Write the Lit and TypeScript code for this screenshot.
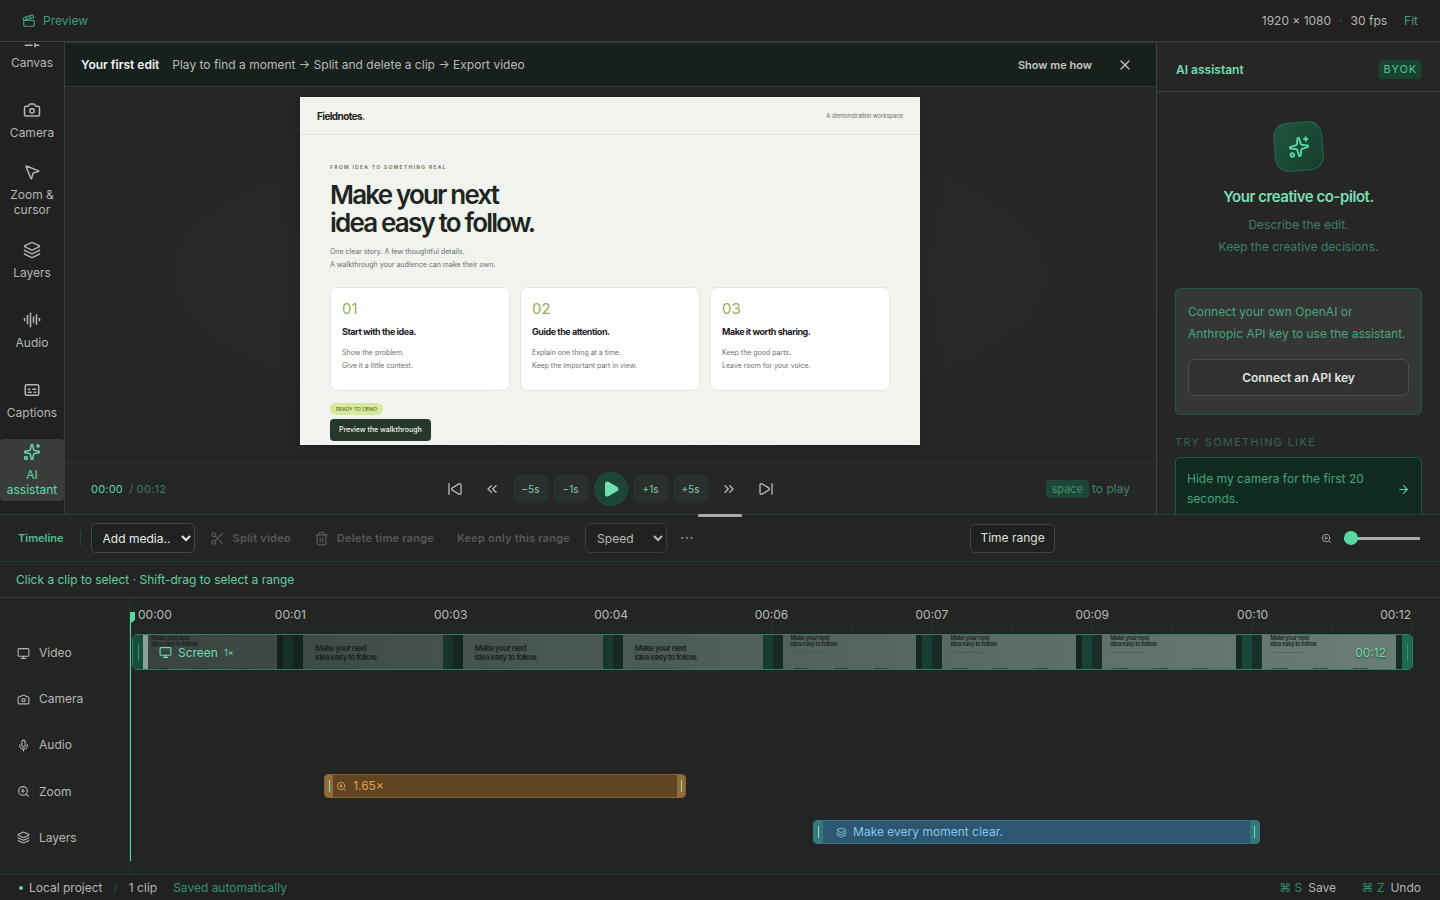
import { LitElement, html, css, svg } from "lit";
import { customElement, property } from "lit/decorators.js";
import { classMap } from "lit/directives/class-map.js";

const ICONS: Record<string, unknown> = {
  clapper: svg`<path d="M20.2 6 3 11l-.9-2.4c-.3-1.1.3-2.2 1.3-2.5l13.5-4c1.1-.3 2.2.3 2.5 1.3Z"/><path d="m6.2 5.3 3.1 3.9"/><path d="m12.4 3.4 3.1 4"/><path d="M3 11h18v8a2 2 0 0 1-2 2H5a2 2 0 0 1-2-2Z"/>`,
  sliders: svg`<path d="M10 5H3"/><path d="M12 19H3"/><path d="M14 3v4"/><path d="M16 17v4"/><path d="M21 12h-9"/><path d="M21 19h-5"/><path d="M21 5h-7"/><path d="M8 10v4"/><path d="M8 12H3"/>`,
  camera: svg`<path d="M13.997 4a2 2 0 0 1 1.76 1.05l.486.9A2 2 0 0 0 18.003 7H20a2 2 0 0 1 2 2v9a2 2 0 0 1-2 2H4a2 2 0 0 1-2-2V9a2 2 0 0 1 2-2h1.997a2 2 0 0 0 1.759-1.048l.489-.904A2 2 0 0 1 10.004 4z"/><circle cx="12" cy="13" r="3"/>`,
  pointer: svg`<path d="M4.037 4.688a.495.495 0 0 1 .651-.651l16 6.5a.5.5 0 0 1-.063.947l-6.124 1.58a2 2 0 0 0-1.438 1.435l-1.579 6.126a.5.5 0 0 1-.947.063z"/>`,
  layers: svg`<path d="M12.83 2.18a2 2 0 0 0-1.66 0L2.6 6.08a1 1 0 0 0 0 1.83l8.58 3.91a2 2 0 0 0 1.66 0l8.58-3.9a1 1 0 0 0 0-1.83z"/><path d="M2 12a1 1 0 0 0 .58.91l8.6 3.91a2 2 0 0 0 1.65 0l8.58-3.9A1 1 0 0 0 22 12"/><path d="M2 17a1 1 0 0 0 .58.91l8.6 3.91a2 2 0 0 0 1.65 0l8.58-3.9A1 1 0 0 0 22 17"/>`,
  audio: svg`<path d="M2 10v3"/><path d="M6 6v11"/><path d="M10 3v18"/><path d="M14 8v7"/><path d="M18 5v13"/><path d="M22 10v3"/>`,
  captions: svg`<rect x="3" y="5" width="18" height="14" rx="2"/><path d="M7 15h4M15 15h2M7 11h2M13 11h4"/>`,
  sparkles: svg`<path d="M11.017 2.814a1 1 0 0 1 1.966 0l1.051 5.558a2 2 0 0 0 1.594 1.594l5.558 1.051a1 1 0 0 1 0 1.966l-5.558 1.051a2 2 0 0 0-1.594 1.594l-1.051 5.558a1 1 0 0 1-1.966 0l-1.051-5.558a2 2 0 0 0-1.594-1.594l-5.558-1.051a1 1 0 0 1 0-1.966l5.558-1.051a2 2 0 0 0 1.594-1.594z"/><path d="M20 2v4"/><path d="M22 4h-4"/><circle cx="4" cy="20" r="2"/>`,
  close: svg`<path d="M18 6 6 18"/><path d="m6 6 12 12"/>`,
  skipBack: svg`<path d="M17.971 4.285A2 2 0 0 1 21 6v12a2 2 0 0 1-3.029 1.715l-9.997-5.998a2 2 0 0 1-.003-3.432z"/><path d="M3 20V4"/>`,
  skipForward: svg`<path d="M21 4v16"/><path d="M6.029 4.285A2 2 0 0 0 3 6v12a2 2 0 0 0 3.029 1.715l9.997-5.998a2 2 0 0 0 .003-3.432z"/>`,
  rewind: svg`<path d="m11 17-5-5 5-5"/><path d="m18 17-5-5 5-5"/>`,
  forward: svg`<path d="m6 17 5-5-5-5"/><path d="m13 17 5-5-5-5"/>`,
  play: svg`<path fill="currentColor" d="M5 5a2 2 0 0 1 3.008-1.728l11.997 6.998a2 2 0 0 1 .003 3.458l-12 7A2 2 0 0 1 5 19z"/>`,
  scissors: svg`<circle cx="6" cy="6" r="3"/><path d="M8.12 8.12 12 12"/><path d="M20 4 8.12 15.88"/><circle cx="6" cy="18" r="3"/><path d="M14.8 14.8 20 20"/>`,
  trash: svg`<path d="M10 11v6"/><path d="M14 11v6"/><path d="M19 6v14a2 2 0 0 1-2 2H7a2 2 0 0 1-2-2V6"/><path d="M3 6h18"/><path d="M8 6V4a2 2 0 0 1 2-2h4a2 2 0 0 1 2 2v2"/>`,
  more: svg`<circle cx="12" cy="12" r="1"/><circle cx="20" cy="12" r="1"/><circle cx="4" cy="12" r="1"/>`,
  zoom: svg`<circle cx="11" cy="11" r="8"/><path d="m21 21-4.35-4.35"/><path d="M11 8v6"/><path d="M8 11h6"/>`,
  monitor: svg`<rect x="2" y="3" width="20" height="14" rx="2"/><path d="M8 21h8"/><path d="M12 17v4"/>`,
  mic: svg`<path d="M12 19v3"/><path d="M19 10v2a7 7 0 0 1-14 0v-2"/><rect x="9" y="2" width="6" height="13" rx="3"/>`,
  arrow: svg`<path d="M5 12h14"/><path d="m12 5 7 7-7 7"/>`,
};

const icon = (name: string, size: number) => html`<svg
  width=${size} height=${size} viewBox="0 0 24 24" fill="none" stroke="currentColor"
  stroke-width="2" stroke-linecap="round" stroke-linejoin="round" aria-hidden="true"
>${ICONS[name]}</svg>`;

const base = css`
  *, *::before, *::after { box-sizing: border-box; }
  svg { display: block; flex: none; }
  button, select, input { font: inherit; color: inherit; margin: 0; letter-spacing: inherit; }
  button { background: none; border: 0; padding: 0; cursor: pointer; }
  h1, h2, h3, p, ul { margin: 0; padding: 0; font-weight: inherit; }
  ul { list-style: none; }
`;

@customElement("tool-rail")
export class ToolRail extends LitElement {
  static styles = [base, css`
    :host {
      display: flex; flex-direction: column; justify-content: flex-end; gap: 8px;
      width: 65px; flex: none; padding-bottom: 13px; overflow: hidden;
      background: #202120; border-right: 1px solid #3a3d3b;
    }
    .tool {
      display: flex; flex-direction: column; align-items: center; justify-content: center;
      gap: 6px; height: 62px; flex: none; border-radius: 4px;
      font-size: 12px; line-height: 15px; color: #b4b7b3;
    }
    .tool.active { background: #3a3c3a; color: #62d8a8; }
  `];
  private tools = [
    ["sliders", "Canvas"], ["camera", "Camera"], ["pointer", "Zoom & cursor"], ["layers", "Layers"],
    ["audio", "Audio"], ["captions", "Captions"], ["sparkles", "AI assistant"],
  ];
  render() {
    return this.tools.map(([name, label]) => html`
      <button class=${classMap({ tool: true, active: name === "sparkles" })}>
        ${icon(name, 18)}<span>${label}</span>
      </button>`);
  }
}

@customElement("walkthrough-frame")
export class WalkthroughFrame extends LitElement {
  static styles = [base, css`
    :host {
      display: flex; flex-direction: column; height: 100%; aspect-ratio: 155 / 87;
      overflow: hidden; background: #f1f3ee; color: #1f2521;
    }
    .top {
      display: flex; justify-content: space-between; align-items: center;
      flex: none; height: 38px; padding: 0 17px; border-bottom: 1px solid #e1e4de;
    }
    .brand { font-size: 10px; font-weight: 700; letter-spacing: -0.06em; }
    .brand span { color: #6b8450; }
    .note { font-size: 6px; letter-spacing: -0.02em; color: #6d736e; }
    .body { padding: 28px 30px 0; display: flex; flex-direction: column; align-items: flex-start; }
    .eyebrow { font-size: 5px; line-height: 8px; font-weight: 600; letter-spacing: 0.26em; color: #66704f; margin-bottom: 10px; }
    .title { font-size: 26px; line-height: 28px; font-weight: 600; letter-spacing: -0.07em; margin-bottom: 8px; }
    .lead { font-size: 7px; line-height: 13px; color: #69706b; margin-bottom: 16px; }
    .cards { display: grid; grid-template-columns: repeat(3, 1fr); gap: 10px; align-self: stretch; margin-bottom: 12px; }
    .card { padding: 12px 11px 18px; background: #fff; border: 1px solid #e3e6e0; border-radius: 7px; }
    .num { font-size: 15px; line-height: 18px; color: #9aac60; margin-bottom: 8px; }
    .name { font-size: 9px; line-height: 12px; font-weight: 700; letter-spacing: -0.05em; color: #1c201d; margin-bottom: 8px; }
    .text { font-size: 7px; line-height: 13px; color: #69706b; }
    .badge { font-size: 5px; line-height: 12px; padding: 0 6px; border-radius: 6px; background: #d8e99a; color: #4b5a35; margin-bottom: 4px; }
    .cta { font-size: 7px; line-height: 22px; padding: 0 9px; border-radius: 4px; background: #253829; color: #f1f3ee; font-weight: 500; }
  `];
  private cards = [
    ["01", "Start with the idea.", "Show the problem.", "Give it a little context."],
    ["02", "Guide the attention.", "Explain one thing at a time.", "Keep the important part in view."],
    ["03", "Make it worth sharing.", "Keep the good parts.", "Leave room for your voice."],
  ];
  render() {
    return html`
      <div class="top"><div class="brand">Fieldnotes<span>.</span></div><div class="note">A demonstration workspace</div></div>
      <div class="body">
        <p class="eyebrow">FROM IDEA TO SOMETHING REAL</p>
        <h1 class="title">Make your next<br />idea easy to follow.</h1>
        <p class="lead">One clear story. A few thoughtful details.<br />A walkthrough your audience can make their own.</p>
        <div class="cards">
          ${this.cards.map(([n, t, a, b]) => html`<div class="card">
            <div class="num">${n}</div><h3 class="name">${t}</h3><p class="text">${a}<br />${b}</p>
          </div>`)}
        </div>
        <div class="badge">READY TO DEMO</div>
        <button class="cta">Preview the walkthrough</button>
      </div>`;
  }
}

@customElement("preview-pane")
export class PreviewPane extends LitElement {
  static styles = [base, css`
    :host { display: flex; flex-direction: column; flex: 1; min-width: 0; }
    .banner {
      display: flex; align-items: center; flex: none; height: 45px; padding: 0 23px 0 16px;
      background: #18201d; border-top: 1px solid #2e3a35; border-bottom: 1px solid #333b37;
      font-size: 12px; color: #b7bbb6;
    }
    .lead { font-weight: 600; color: #f2f4f0; margin-right: 13px; }
    .how { margin-left: auto; margin-right: 25px; font-size: 11px; font-weight: 600; color: #c3c6c1; }
    .stage {
      display: flex; justify-content: center; flex: 1; min-height: 0; padding: 10px 1px 17px 0;
      background: radial-gradient(ellipse at center, #2c2e2d 0%, #252726 72%);
    }
    walkthrough-frame { box-shadow: 0 4px 20px rgba(0, 0, 0, 0.2); }
    .player {
      display: grid; grid-template-columns: 1fr auto 1fr; align-items: center;
      flex: none; height: 52px; padding: 0 26px; background: #252726; border-top: 1px solid #2c312e;
      font-size: 12px;
    }
    .time { font-size: 11px; color: #5fcfa0; letter-spacing: 0.02em; }
    .total { color: #3a7a60; margin-left: 3px; }
    .controls { display: flex; align-items: center; gap: 6px; color: #b4b7b3; }
    .icon { display: grid; place-items: center; width: 31px; height: 28px; }
    .jump {
      width: 34px; height: 28px; border-radius: 6px; background: #2b2f2d; border: 1px solid #20372e;
      font-size: 10px; color: #7fcfab;
    }
    .play {
      display: grid; place-items: center; width: 34px; height: 34px; border-radius: 50%;
      background: #1b4534; border: 1px solid #1d4f3b; color: #72e0b2;
    }
    .tip { justify-self: end; color: #3a8263; }
    .key { display: inline-block; margin-right: 3px; padding: 0 6px; border-radius: 3px; background: #1e4536; font: inherit; font-size: 11px; line-height: 18px; color: #3c916e; }
  `];
  render() {
    return html`
      <div class="banner">
        <span class="lead">Your first edit</span>
        <span>Play to find a moment → Split and delete a clip → Export video</span>
        <button class="how">Show me how</button>
        <button aria-label="Dismiss">${icon("close", 16)}</button>
      </div>
      <div class="stage"><walkthrough-frame></walkthrough-frame></div>
      <div class="player">
        <div class="time">00:00 <span class="total">/ 00:12</span></div>
        <div class="controls">
          <button class="icon" aria-label="Start">${icon("skipBack", 16)}</button>
          <button class="icon" aria-label="Back">${icon("rewind", 16)}</button>
          <button class="jump">−5s</button>
          <button class="jump">−1s</button>
          <button class="play" aria-label="Play">${icon("play", 18)}</button>
          <button class="jump">+1s</button>
          <button class="jump">+5s</button>
          <button class="icon" aria-label="Forward">${icon("forward", 16)}</button>
          <button class="icon" aria-label="End">${icon("skipForward", 16)}</button>
        </div>
        <div class="tip"><kbd class="key">space</kbd>to play</div>
      </div>`;
  }
}

@customElement("assistant-panel")
export class AssistantPanel extends LitElement {
  static styles = [base, css`
    :host {
      display: flex; flex-direction: column; width: 284px; flex: none; overflow: hidden;
      background: #262724; border-left: 1px solid #414340; font-size: 12px;
    }
    .head {
      display: flex; align-items: center; justify-content: space-between; flex: none;
      height: 50px; padding: 6px 19px 0; border-bottom: 1px solid #414340;
    }
    .name { font-size: 12px; font-weight: 600; color: #73dcb1; }
    .byok { padding: 0 4px; border-radius: 3px; background: #174330; color: #55c294; font-size: 11px; line-height: 19px; letter-spacing: 0.08em; }
    .body { display: flex; flex-direction: column; padding: 30px 18px 0; }
    .mark {
      display: grid; place-items: center; align-self: center; width: 49px; height: 49px;
      border-radius: 14px; border: 1px solid #286a4f; color: #5ddaa6;
      background: linear-gradient(135deg, #1f5640, #173c2c); rotate: -5deg; margin-bottom: 15px;
    }
    .title { font-size: 15px; line-height: 22px; font-weight: 600; letter-spacing: -0.03em; text-align: center; color: #79dfb5; margin-bottom: 6px; }
    .sub { line-height: 22px; text-align: center; color: #3f7f66; margin-bottom: 30px; }
    .box { padding: 12px; border: 1px solid #1f5740; border-radius: 5px; background: #353734; line-height: 22px; color: #47a57f; margin-bottom: 19px; }
    .connect {
      display: block; width: 100%; height: 37px; margin: 14px 0 6px; border-radius: 7px;
      border: 1px solid #4a4d49; background: #303231; font-weight: 600; color: #e1e4df;
    }
    .try { font-size: 11px; line-height: 16px; letter-spacing: 0.12em; color: #32654f; margin-bottom: 7px; }
    .idea {
      display: flex; align-items: center; justify-content: space-between; gap: 20px;
      padding: 11px 11px; border: 1px solid #1d5a42; border-radius: 5px; background: #112b20;
      color: #45a37c; line-height: 20px; text-align: left;
    }
    .idea svg { color: #5fcfa0; }
  `];
  render() {
    return html`
      <div class="head"><h2 class="name">AI assistant</h2><span class="byok">BYOK</span></div>
      <div class="body">
        <div class="mark">${icon("sparkles", 22)}</div>
        <h3 class="title">Your creative co-pilot.</h3>
        <p class="sub">Describe the edit.<br />Keep the creative decisions.</p>
        <div class="box">
          <p>Connect your own OpenAI or Anthropic API key to use the assistant.</p>
          <button class="connect">Connect an API key</button>
        </div>
        <p class="try">TRY SOMETHING LIKE</p>
        <button class="idea"><span>Hide my camera for the first 20 seconds.</span>${icon("arrow", 13)}</button>
      </div>`;
  }
}

@customElement("clip-thumb")
export class ClipThumb extends LitElement {
  @property({ type: Boolean, reflect: true }) zoomed = false;
  static styles = [base, css`
    :host { display: flex; flex: 1; min-width: 0; height: 100%; }
    .dark { width: 10px; flex: none; background: #142e27; }
    .teal { width: 10px; flex: none; background: #164c3f; }
    .edge { width: 6px; flex: none; background: #12261d; }
    .shot { flex: 1; min-width: 0; overflow: hidden; padding: 0 8px; background: #7f9288; color: #18211d; display: flex; flex-direction: column; }
    .text { font-size: 6px; line-height: 6px; font-weight: 600; letter-spacing: -0.07em; white-space: nowrap; }
    .rule { width: 34px; height: 1px; margin-top: 5px; background: #6b7c73; }
    .foot { display: flex; gap: 25px; margin-top: auto; padding-left: 3px; }
    .foot span { width: 15px; height: 1px; background: #46544d; }
    :host([zoomed]) .shot { padding: 9px 12px 0; }
    :host([zoomed]) .text { font-size: 8px; line-height: 9px; }
    :host([zoomed]) .rule { width: 42px; margin-top: auto; }
  `];
  render() {
    return html`
      <div class="dark"></div>
      <div class="shot">
        <div class="text">Make your next<br />idea easy to follow.</div>
        <div class="rule"></div>
        ${this.zoomed ? "" : html`<div class="foot"><span></span><span></span><span></span></div>`}
      </div>
      ${this.zoomed ? "" : html`<div class="edge"></div>`}
      <div class="teal"></div>`;
  }
}

@customElement("time-line")
export class TimeLine extends LitElement {
  static styles = [base, css`
    :host { display: block; position: relative; flex: none; background: #232524; border-top: 1px solid #1e4436; font-size: 12px; }
    .grip { position: absolute; top: -1px; left: 50%; width: 44px; height: 3px; margin-left: -22px; border-radius: 1px; background: #a9aca9; }
    .bar { display: flex; align-items: center; justify-content: space-between; height: 47px; padding: 0 20px 0 18px; border-bottom: 1px solid #1f3a30; }
    .group { display: flex; align-items: center; }
    .heading { font-size: 11px; font-weight: 600; color: #4fbd90; padding-right: 16px; border-right: 1px solid #1f4637; line-height: 16px; margin-right: 10px; }
    .select { height: 30px; padding: 0 7px; border: 1px solid #454846; border-radius: 5px; background: #202221; font-size: 12px; color-scheme: dark; }
    .media { width: 104px; color: #e9ebe8; margin-right: 15px; }
    .speed { width: 82px; color: #b7bab6; margin: 0 3px 0 15px; border-color: #393c3a; }
    .act { display: flex; align-items: center; gap: 8px; font-size: 11px; font-weight: 600; letter-spacing: 0.02em; color: #565957; margin-right: 23px; }
    .act.last { margin-right: 0; }
    .dots { padding: 0 10px; color: #7a7d7a; }
    .range { height: 29px; padding: 0 9px; border: 1px solid #414442; border-radius: 5px; background: #1f2120; color: #dfe1de; }
    .scale { display: flex; align-items: center; gap: 12px; color: #a9aca9; }
    .slider { appearance: none; width: 76px; height: 14px; background: linear-gradient(#a9aca9, #a9aca9) center / 100% 3px no-repeat; }
    .slider::-webkit-slider-thumb { appearance: none; width: 14px; height: 14px; border-radius: 50%; background: #5ad8a3; }
    .hint { height: 36px; padding: 0 16px; line-height: 36px; color: #5fd0a1; border-bottom: 1px solid #3b3e3c; }
    .body { display: grid; grid-template-columns: 130px 1fr; }
    .labels { display: grid; grid-template-rows: repeat(5, 1fr); padding: 32px 0 13px 17px; border-right: 1px solid #1c3a2f; color: #b4b7b3; }
    .label { display: flex; align-items: center; gap: 9px; }
    .area { position: relative; padding-right: 27px; padding-bottom: 15px; }
    .ruler { height: 31px; border-bottom: 1px solid #1d332a; display: flex; flex-direction: column; justify-content: space-between; }
    .stamps { display: grid; grid-template-columns: minmax(0, 1fr) repeat(7, minmax(0, 2fr)) minmax(0, 1fr); padding-top: 9px; line-height: 15px; color: #b7bab6; }
    .stamp { text-align: center; }
    .stamp.first { text-align: left; padding-left: 8px; }
    .stamp.end { text-align: right; padding-right: 2px; }
    .ticks { display: grid; grid-template-columns: repeat(16, 1fr); height: 6px; }
    .ticks span { border-right: 1px solid #29352f; }
    .lane { height: 46px; padding: 7px 0 0 2px; }
    .lane.video { padding-top: 5px; }
    .clip { display: flex; align-items: center; height: 24px; border: 1px solid; border-radius: 4px; overflow: hidden; }
    .clip.zoom { background: #614522; border-color: #8a5e2d; color: #e2a04c; }
    .clip.text { background: #2d5770; border-color: #3a7590; color: #84c6ec; }
    .handle { display: grid; place-items: center; align-self: stretch; width: 8px; flex: none; background: #936a3c; }
    .handle::after { content: ""; width: 1px; height: 12px; background: #8fe0a8; }
    .text .handle { width: 9px; background: #35787c; }
    .tag { display: flex; align-items: center; gap: 6px; flex: 1; padding-left: 3px; }
    .text .tag { padding-left: 13px; }
    .strip { position: relative; display: flex; height: 36px; border: 1px solid #2f7d62; border-radius: 5px; overflow: hidden; background: #164c3f; }
    .shade { position: absolute; inset: 0; background: linear-gradient(90deg, rgba(23, 29, 28, 0.68), rgba(35, 60, 52, 0.22)); }
    .grab { position: absolute; top: 0; bottom: 0; left: 0; width: 10px; display: grid; place-items: center; background: #194d3d; }
    .grab.right { left: auto; right: 0; background: #1e6b53; }
    .grab::after { content: ""; width: 1px; height: 17px; background: #37916f; }
    .sliver { position: absolute; top: 0; bottom: 0; left: 10px; width: 5px; background: #88a396; }
    .over { position: absolute; top: 1px; bottom: 0; left: 26px; right: 26px; display: flex; align-items: center; gap: 6px; color: #6fdcb2; }
    .rate { font-size: 9px; }
    .len { margin-left: auto; text-shadow: 0 1px 2px rgba(0, 0, 0, 0.6); }
    .head { position: absolute; top: 14px; bottom: 13px; left: 0; width: 5px; background: linear-gradient(#5ad8a3, #5ad8a3) left / 1px 100% no-repeat; }
    .head::before { content: ""; display: block; width: 5px; height: 11px; background: #5ad8a3; clip-path: polygon(0 0, 100% 0, 100% 72%, 20% 100%, 0 100%); }
  `];
  private duration = 12;
  private labels = [["monitor", "Video"], ["camera", "Camera"], ["mic", "Audio"], ["zoom", "Zoom"], ["layers", "Layers"]];
  private stamps = ["00:00", "00:01", "00:03", "00:04", "00:06", "00:07", "00:09", "00:10", "00:12"];
  private zoomed = [false, true, true, true, false, false, false, false];
  private span(start: number, end: number) {
    return `margin-left:${(start / this.duration) * 100}%;width:${((end - start) / this.duration) * 100}%`;
  }
  render() {
    return html`
      <div class="grip"></div>
      <div class="bar">
        <div class="group">
          <h2 class="heading">Timeline</h2>
          <select class="select media" aria-label="Add media"><option>Add media…</option></select>
          <button class="act">${icon("scissors", 15)}Split video</button>
          <button class="act">${icon("trash", 15)}Delete time range</button>
          <button class="act last">Keep only this range</button>
          <select class="select speed" aria-label="Speed"><option>Speed</option></select>
          <button class="dots" aria-label="More">${icon("more", 14)}</button>
        </div>
        <button class="range">Time range</button>
        <label class="scale">${icon("zoom", 11)}<input class="slider" type="range" min="0" max="100" value="0" aria-label="Timeline zoom" /></label>
      </div>
      <p class="hint">Click a clip to select · Shift-drag to select a range</p>
      <div class="body">
        <ul class="labels">
          ${this.labels.map(([n, t]) => html`<li class="label">${icon(n, 13)}${t}</li>`)}
        </ul>
        <div class="area">
          <div class="ruler">
            <div class="stamps">
              ${this.stamps.map((t, i) => html`<span class=${classMap({ stamp: true, first: i === 0, end: i === 8 })}>${t}</span>`)}
            </div>
            <div class="ticks">${Array.from({ length: 16 }, () => html`<span></span>`)}</div>
          </div>
          <div class="lane video">
            <div class="strip">
              ${this.zoomed.map((z) => html`<clip-thumb ?zoomed=${z}></clip-thumb>`)}
              <div class="shade"></div>
              <div class="sliver"></div>
              <div class="grab"></div>
              <div class="grab right"></div>
              <div class="over">${icon("monitor", 13)}<span>Screen</span><span class="rate">1×</span><span class="len">00:12</span></div>
            </div>
          </div>
          <div class="lane"></div>
          <div class="lane"></div>
          <div class="lane">
            <div class="clip zoom" style=${this.span(1.8, 5.19)}>
              <span class="handle"></span><span class="tag">${icon("zoom", 11)}1.65×</span><span class="handle"></span>
            </div>
          </div>
          <div class="lane">
            <div class="clip text" style=${this.span(6.38, 10.57)}>
              <span class="handle"></span><span class="tag">${icon("layers", 11)}Make every moment clear.</span><span class="handle"></span>
            </div>
          </div>
          <div class="head"></div>
        </div>
      </div>`;
  }
}

@customElement("app-root")
export class AppRoot extends LitElement {
  static styles = [base, css`
    :host {
      display: flex; flex-direction: column; height: 100vh; overflow: hidden;
      background: #202120; color: #b4b7b3; font-family: Inter, "Liberation Sans", sans-serif;
      font-size: 12px; line-height: 16px;
    }
    .top {
      display: flex; align-items: center; flex: none; height: 42px; padding: 0 22px;
      background: #202120; border-bottom: 1px solid #3d403e;
    }
    .preview { display: flex; align-items: center; gap: 7px; color: #3f9f7b; }
    .size { margin-left: auto; }
    .sep { color: #2c7558; margin: 0 8px; }
    .fit { color: #3f9f7b; margin-left: 17px; }
    .work { display: flex; flex: 1; min-height: 0; }
    .foot { display: flex; align-items: center; flex: none; height: 26px; padding: 0 19px; border-top: 1px solid #1d3b30; }
    .dot { width: 4px; height: 4px; border-radius: 50%; background: #5ad8a3; margin-right: 6px; }
    .slash { color: #284a3e; margin: 0 11px; }
    .saved { color: #36916e; margin-left: 16px; }
    .keys { display: flex; gap: 6px; margin-left: auto; }
    .keys.next { margin-left: 0; }
    .kbd { font: inherit; color: #2f8c69; }
    .mid { color: #2c3f38; margin: 0 11px; }
  `];
  render() {
    return html`
      <header class="top">
        <div class="preview">${icon("clapper", 14)}<span>Preview</span></div>
        <span class="size">1920 × 1080</span><span class="sep">·</span><span>30 fps</span>
        <button class="fit">Fit</button>
      </header>
      <main class="work">
        <tool-rail></tool-rail>
        <preview-pane></preview-pane>
        <assistant-panel></assistant-panel>
      </main>
      <time-line></time-line>
      <footer class="foot">
        <span class="dot"></span><span>Local project</span><span class="slash">/</span><span>1 clip</span>
        <span class="saved">Saved automatically</span>
        <span class="keys"><kbd class="kbd">⌘ S</kbd><span>Save</span></span>
        <span class="mid">·</span>
        <span class="keys next"><kbd class="kbd">⌘ Z</kbd><span>Undo</span></span>
      </footer>`;
  }
}
